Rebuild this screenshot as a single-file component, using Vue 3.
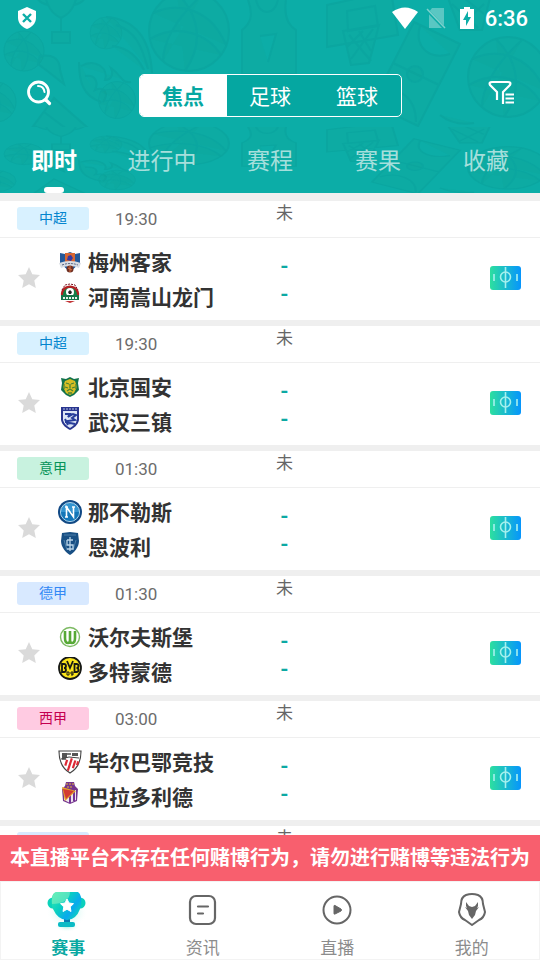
<template>
  <div class="page">
    <header class="header">
      <svg class="doodles" viewBox="0 0 540 193" preserveAspectRatio="xMidYMid slice" aria-hidden="true">
        <defs>
          <g id="ball">
            <circle r="40" />
            <path d="M-36-18C-10-30 22-22 37 14M-39 8C-12-8 18 2 32 24M-12-38C12-14 14 14-4 40M14-37C-14-12-26 12-26 30" />
          </g>
          <g id="hoop">
            <path d="M0 8l64-14 7 44-71 12zM20 14l28-5 3 20-30 5zM16 34l36-6-10 38-18 2zM22 38l22 26M32 34l12 20M46 32l-22 30M36 34l-16 16" />
          </g>
          <g id="court">
            <path d="M38 0l46 22-42 82-46-22zM17 41l46 22M44 4c-6 22 10 34 30 28M4 72c18-10 36 4 36 28" />
            <circle cx="39" cy="52" r="8" />
          </g>
          <g id="cup">
            <path d="M0 0h34c0 22-4 34-17 40C4 34 0 22 0 0zM0 5h-10c0 14 4 20 14 22M34 5h10c0 14-4 20-14 22M17 40v14M8 54h18v11H8z" />
          </g>
          <g id="shirt">
            <path d="M8 0C14 16 10 24 2 30v44h54V30C46 24 44 14 46 0M16 0c4 16 18 16 22 0M20 36l16-2-8 28" />
          </g>
          <g id="flame">
            <path d="M0 4c14-8 28 2 24 14 8 0 8-8 6-12 12 8 10 16 20 14M4 14c10-2 14 6 10 14 10-4 14 4 8 12M-2 0c0 20 4 34 22 40" />
          </g>
          <g id="horn">
            <path d="M0 46L34 0l34 30zM14 28l28 12M24 14l24 18M4 46l-8-4" />
          </g>
          <g id="row">
            <use href="#cup" x="44" y="-22" />
            <use href="#ball" transform="translate(24 51) scale(.5)" />
            <use href="#ball" transform="translate(106 33) scale(.4)" />
            <path d="M106 17c28 2 44 20 46 56M116 25c20 6 26 22 32 44M112 46c18 2 26 12 32 24" />
            <use href="#ball" x="189" y="31" />
            <use href="#flame" x="81" y="62" />
            <use href="#ball" transform="translate(117 100) scale(.46)" />
            <use href="#horn" x="20" y="98" />
            <path d="M40 56c12-2 20 2 20 14l4 14-18-14-8-6z" />
            <use href="#shirt" x="240" y="0" />
            <use href="#hoop" x="327" y="-3" />
            <use href="#court" x="376" y="22" />
            <use href="#ball" x="508" y="77" />
            <use href="#ball" transform="translate(-4 102) scale(.5)" />
            <path d="M440 115c10 8 22 10 34 8M448-2h42l-8 32h-22zM452 4l26 24M464-2l20 16M484 4l-26 24" />
          </g>
          <clipPath id="upper"><path d="M0 0h540v127H0z" /></clipPath>
          <clipPath id="lower"><path d="M0 127h540v66H0z" /></clipPath>
        </defs>
        <g clip-path="url(#upper)"><use href="#row" /></g>
        <g clip-path="url(#lower)"><use href="#row" transform="translate(0 127) scale(1 .53)" /></g>
      </svg>

      <div class="status-bar">
        <svg class="shield" viewBox="0 0 20 24"><path d="M10 1l9 4v7c0 5-4 9-9 11-5-2-9-6-9-11V5z" fill="#fff" /><path d="M6 8l8 8M14 8l-8 8" stroke="#0cada7" stroke-width="2.4" /></svg>
        <svg class="wifi" viewBox="0 0 26 22"><path d="M0 5Q13-4 26 5L13 22z" fill="#fff" /></svg>
        <svg class="sim" viewBox="0 0 20 22"><path d="M6 1h12v20H3V5z" fill="#fff" opacity=".32" /><path d="M1 3l18 19" stroke="#0cada7" stroke-width="3" /><path d="M1 2l18 19" stroke="#7dd1cd" stroke-width="1.5" /></svg>
        <svg class="battery" viewBox="0 0 14 22"><path d="M4 0h6v2h4v20H0V2h4z" fill="#fff" /><path d="M8 4L3 13h3v6l5-9H8z" fill="#0cada7" /></svg>
        <span class="clock">6:36</span>
      </div>

      <div class="toolbar">
        <button class="icon-btn" aria-label="搜索">
          <svg width="26" height="26" viewBox="0 0 26 26" fill="none" stroke="#fff" stroke-linecap="round"><circle cx="12.5" cy="12" r="10" stroke-width="2.8" /><path d="M20 20l3.500 3.500" stroke-width="3.200" /><path d="M12 6c4 0 6 2 6.500 6" stroke-width="2" /></svg>
        </button>
        <div class="segments">
          <button
            v-for="sport in sports"
            :key="sport"
            class="segment"
            :class="{ active: sport === activeSport }"
            @click="activeSport = sport"
          >{{ sport }}</button>
        </div>
        <button class="icon-btn" aria-label="筛选">
          <svg width="26" height="26" viewBox="0 0 26 26" fill="none" stroke="#fff" stroke-width="2.200"><path d="M9 20v-8L2 5c-1-2 0-3 2-3h16c2 0 3 1 2 3l-7 7v12" stroke-linejoin="round" /><path d="M17.500 14.500H26M17.500 18.500H26M17.500 22.500H26" /></svg>
        </button>
      </div>

      <nav class="tabs">
        <button
          v-for="tab in tabs"
          :key="tab"
          class="tab"
          :class="{ active: tab === activeTab }"
          @click="activeTab = tab"
        >{{ tab }}</button>
      </nav>
    </header>

    <main class="list">
      <article v-for="match in matches" :key="match.id" class="match">
        <div class="meta">
          <div class="meta-left">
            <span class="league" :class="match.color">{{ match.league }}</span>
            <time class="time">{{ match.time }}</time>
          </div>
          <span class="state">未</span>
        </div>
        <div v-if="match.teams.length" class="body">
          <div class="teams">
            <button class="star" aria-label="收藏">
              <svg width="24" height="24" viewBox="0 0 24 24"><path d="M12 1l3.300 7.200 7.700.9-5.700 5.300 1.500 7.600L12 18.200 5.200 22l1.500-7.600L1 9.100l7.700-.9z" fill="#dadada" /></svg>
            </button>
            <div class="crests">
              <svg v-for="team in match.teams" :key="team.crest" width="24" height="24" viewBox="0 0 24 24">
                <g v-if="team.crest === 'meizhou'">
                  <path d="M2 3l5 1 5-2 5 2 5-1v10l-10 9L2 13z" fill="#235899" />
                  <path d="M7 3h10v10l-5 9-5-9z" fill="#d76632" /><path d="M10 6l3-1 2 3-2 3-4-1z" fill="#3838a0" />
                  <path d="M1 13q11-4 22 0l-2 5q-9-4-18 0z" fill="#d8dce3" /><path d="M4 15q8-3 16 0" stroke="#55627f" stroke-dasharray="2 1" fill="none" />
                  <circle cx="12" cy="19" r="3.500" fill="#6d2f22" /><path d="M10 18l4 2M12 16v6" stroke="#df7041" />
                </g>
                <g v-else-if="team.crest === 'henan'">
                  <path d="M3 14C1 0 23 0 21 14z" fill="#b52023" /><path d="M5 14C4 3 20 3 19 14z" fill="#168047" />
                  <path d="M4 8l3-5 5-1 5 1 3 5" fill="none" stroke="#7d1620" stroke-dasharray="2 1" /><circle cx="12" cy="10" r="4" fill="#fff" />
                  <path d="M12 8l2 2-1 2h-2l-1-2z" fill="#222" />
                  <path d="M3 13h18v5H3z" fill="#17764a" /><path d="M5 16h14" stroke="#e8f4ec" stroke-width="2" stroke-dasharray="2 1" /><path d="M7 19h10l-5 2z" fill="#c13234" />
                </g>
                <g v-else-if="team.crest === 'beijing'">
                  <path d="M12 2l4 2 5-1-1 5 1 7-5 5-4 2-4-2-5-5 1-7-1-5 5 1z" fill="#12724b" />
                  <path d="M7 6l5-2 5 2 2 6-3 6-4 2-4-2-3-6z" fill="#d8be23" />
                  <path d="M8 8l3 1M16 8l-3 1M7 12l3 1M17 12l-3 1M9 16l3-2 3 2M12 9v4M6 9v5M18 9v5M10 18h4" fill="none" stroke="#4a8233" stroke-width="1.300" />
                </g>
                <g v-else-if="team.crest === 'wuhan'">
                  <path d="M3 0h18v13c-1 5-5 8-9 10-4-2-8-5-9-10z" fill="#28358f" /><path d="M5 4h14v9c-1 4-4 6-7 8-3-2-6-4-7-8z" fill="#dce4f5" />
                  <path d="M5 2h14" stroke="#b9c3e5" stroke-dasharray="2 1" /><path d="M7 7h5l-2 3 5-3 3 1-4 3 3 2-7 1 2 3M7 12l3 6M12 16l5 1M7 15h3" fill="none" stroke="#263d9b" stroke-width="2" />
                </g>
                <g v-else-if="team.crest === 'napoli'">
                  <circle cx="12" cy="12" r="12" fill="#114985" /><circle cx="12" cy="12" r="9.500" fill="#3494d0" stroke="#b2d8ee" />
                  <path d="M3 12a9 9 0 0018 0z" fill="#1476b8" /><path d="M8.500 17V7l7 10V7M7 7h3M14 7h3M7 17h3" stroke="#fff" stroke-width="1.600" fill="none" />
                </g>
                <g v-else-if="team.crest === 'empoli'">
                  <path d="M4 1l8-1 8 1 1 8c0 6-5 12-9 14C8 21 3 15 3 9z" fill="#184f84" /><path d="M6 3h12M6 8l3 10M18 8l-3 10" stroke="#4c7fa8" fill="none" />
                  <path d="M12 5v14M9 8h6M9 8v5h6v4H9" stroke="#b9d4e8" stroke-width="1.300" fill="none" />
                </g>
                <g v-else-if="team.crest === 'wolfsburg'">
                  <circle cx="12" cy="12" r="9.500" fill="#fff" stroke="#7cba62" stroke-width="1.400" /><path d="M7 6v7q0 5 3 5 2 0 2-3 0 3 2 3 3 0 3-5V6M12 6v9" fill="none" stroke="#57a936" stroke-width="2.600" />
                </g>
                <g v-else-if="team.crest === 'dortmund'">
                  <circle cx="12" cy="11" r="11" fill="#fbe51b" stroke="#171915" stroke-width="1.800" />
                  <path d="M4 7v8h2q2 0 2-2t-2-2q2 0 2-2t-2-2zM9 4l3 7 3-7M16.500 7v8h2q2 0 2-2t-2-2q2 0 2-2t-2-2z" fill="none" stroke="#171915" stroke-width="1.800" />
                  <path d="M9 15h2v3H9zM13 18h2v-3h-2v2h2" fill="none" stroke="#171915" />
                </g>
                <g v-else-if="team.crest === 'bilbao'">
                  <path d="M1 1h22c0 10-4 18-11 22C5 19 1 11 1 1z" fill="#fff" stroke="#444" stroke-width="1.200" /><path d="M4 3h5v5H4zM14 3h6v3h-6" fill="#555" />
                  <path d="M9 4h4M4 9h4" stroke="#777" stroke-width="2" /><path d="M8 17V11M12 21V8M16 17V9M19 13V9" stroke="#dc2935" stroke-width="2.200" transform="rotate(18 12 14)" /><path d="M3 9l8-2 10 1" stroke="#444" fill="none" />
                </g>
                <g v-else-if="team.crest === 'valladolid'">
                  <path d="M8 0h8l1 4 3 3-1 12-7 3-7-3L4 7l3-3z" fill="#75358d" /><path d="M6 8h12v10l-6 3-6-3z" fill="#eee6ee" />
                  <path d="M12 8v13M16 8v11" stroke="#733396" stroke-width="2" /><path d="M4 5l14 4-11 10z" fill="#e3a42b" /><path d="M5 7l11 2-8 8z" fill="#d33b33" /><path d="M8 2h8M9 5h6" stroke="#e5b437" stroke-dasharray="2 1" />
                </g>
              </svg>
            </div>
            <div class="names">
              <span v-for="team in match.teams" :key="team.name">{{ team.name }}</span>
            </div>
          </div>
          <div class="score"><span>-</span><span>-</span></div>
          <button class="pitch" aria-label="阵容">
            <svg width="31" height="24" viewBox="0 0 31 24">
              <defs><linearGradient id="grass"><stop offset="0" stop-color="#2ddf9f" /><stop offset="1" stop-color="#0695fd" /></linearGradient></defs>
              <rect width="31" height="24" rx="3" fill="url(#grass)" />
              <g fill="none" stroke="#a5f0ee" stroke-width="1.600"><path d="M15.500 1v21M4 8v7M27 8v7" /><circle cx="15.500" cy="11" r="5" /></g>
            </svg>
          </button>
        </div>
      </article>
    </main>

    <p class="notice">本直播平台不存在任何赌博行为，请勿进行赌博等违法行为</p>

    <nav class="bottom-nav">
      <button
        v-for="item in navItems"
        :key="item.label"
        class="nav-item"
        :class="{ active: item.label === activeNav }"
        @click="activeNav = item.label"
      >
        <svg v-if="item.icon === 'cup'" width="44" height="44" viewBox="0 0 44 44">
          <defs>
            <linearGradient id="cupFill" x1="0" y1="0" x2="1" y2=".7"><stop offset="0" stop-color="#35eab0" /><stop offset=".45" stop-color="#08cfc1" /><stop offset=".75" stop-color="#08a9ee" /><stop offset="1" stop-color="#0bd3bb" /></linearGradient>
            <radialGradient id="glow"><stop offset="0" stop-color="#59e9cc" stop-opacity=".65" /><stop offset="1" stop-color="#fff" stop-opacity="0" /></radialGradient>
          </defs>
          <ellipse cx="21" cy="24" rx="21" ry="16" fill="url(#glow)" /><ellipse cx="21" cy="38" rx="13" ry="6" fill="url(#glow)" />
          <circle cx="7" cy="15" r="5.500" fill="#0bd3ba" /><circle cx="34" cy="15" r="5.500" fill="#0bcfbc" />
          <path d="M18 30h6v5h-6z" fill="#067bb0" /><rect x="12" y="34" width="17" height="5" rx="2" fill="#08bbc5" />
          <path d="M10 4h22q2 1 3 5 1 8-1 12-4 11-13 11T7 21Q5 17 6 9q1-4 4-5z" fill="url(#cupFill)" /><path d="M10 4h14c0 8-7 12-18 12q-1-10 4-12z" fill="#9cf5bf" opacity=".5" />
          <path d="M21 11l2 4 4.500.7-3.300 3.200.8 4.600-4-2.200-4 2.200.8-4.600-3.300-3.200 4.500-.7z" fill="#fff" stroke="#fff" stroke-linejoin="round" />
        </svg>
        <svg v-else-if="item.icon === 'news'" width="44" height="44" viewBox="0 0 44 44" fill="none" stroke="#666" stroke-width="2.200" stroke-linecap="round"><rect x="9" y="8" width="25" height="28" rx="6" /><path d="M17 18.500h10M17 25.500h5" /></svg>
        <svg v-else-if="item.icon === 'live'" width="44" height="44" viewBox="0 0 44 44"><circle cx="22" cy="22" r="13.500" fill="none" stroke="#666" stroke-width="2" /><path d="M19 18q0-1 1-.5l6 3.500q1 1 0 2l-6 3q-1 .5-1-.5z" fill="#666" stroke="#666" /></svg>
        <svg v-else width="44" height="44" viewBox="0 0 44 44"><path d="M16 7q6-2 12 0 5 2 5 9l2 8q-1 6-6 8l-7 5-7-5q-5-2-6-8l2-8q0-7 5-9z" fill="none" stroke="#666" stroke-width="2" stroke-linejoin="round" /><path d="M16 14l3 4 3 1 3-1 3-4v4l-1 2 2-1-3 4-1 4-3 4-3-4-1-4-3-4 2 1-1-2z" fill="#666" /></svg>
        <span>{{ item.label }}</span>
      </button>
    </nav>
  </div>
</template>

<script setup>
import { ref } from 'vue';

const sports = ['焦点', '足球', '篮球'];
const tabs = ['即时', '进行中', '赛程', '赛果', '收藏'];
const activeSport = ref('焦点');
const activeTab = ref('即时');
const activeNav = ref('赛事');

const matches = ref([
  { id: 1, league: '中超', color: 'sky', time: '19:30', teams: [{ name: '梅州客家', crest: 'meizhou' }, { name: '河南嵩山龙门', crest: 'henan' }] },
  { id: 2, league: '中超', color: 'sky', time: '19:30', teams: [{ name: '北京国安', crest: 'beijing' }, { name: '武汉三镇', crest: 'wuhan' }] },
  { id: 3, league: '意甲', color: 'green', time: '01:30', teams: [{ name: '那不勒斯', crest: 'napoli' }, { name: '恩波利', crest: 'empoli' }] },
  { id: 4, league: '德甲', color: 'blue', time: '01:30', teams: [{ name: '沃尔夫斯堡', crest: 'wolfsburg' }, { name: '多特蒙德', crest: 'dortmund' }] },
  { id: 5, league: '西甲', color: 'pink', time: '03:00', teams: [{ name: '毕尔巴鄂竞技', crest: 'bilbao' }, { name: '巴拉多利德', crest: 'valladolid' }] },
  { id: 6, league: '', color: 'blue', time: '', teams: [] },
]);

const navItems = [
  { label: '赛事', icon: 'cup' },
  { label: '资讯', icon: 'news' },
  { label: '直播', icon: 'live' },
  { label: '我的', icon: 'mine' },
];
</script>

<style>
html, body {
  margin: 0;
}
</style>

<style scoped>
.page {
  display: flex;
  flex-direction: column;
  height: 100vh;
  background: #efefef;
  font-family: Roboto, 'Noto Sans CJK SC', sans-serif;
  color: #333;
}

button {
  margin: 0;
  padding: 0;
  border: none;
  background: none;
  font: inherit;
  color: inherit;
  cursor: pointer;
}

svg {
  display: block;
  flex: none;
}

.header {
  position: relative;
  flex: none;
  background: #0cada7;
  color: #fff;
}

/* 头部背景线稿 */
.doodles {
  position: absolute;
  inset: 0;
  width: 100%;
  height: 100%;
  fill: rgba(20, 150, 130, 0.08);
  stroke: #0ba6a0;
  stroke-width: 2;
}

.status-bar,
.toolbar,
.tabs {
  position: relative;
}

.status-bar {
  display: flex;
  align-items: center;
  height: 36px;
  padding: 0 12px 0 17px;
}

.shield {
  width: 20px;
  height: 24px;
  margin-right: auto;
}

.wifi {
  width: 26px;
  height: 22px;
}

.sim {
  width: 20px;
  height: 22px;
  margin: 0 14px 0 8px;
}

.battery {
  width: 14px;
  height: 22px;
}

.clock {
  margin-left: 11px;
  font-size: 22px;
  font-weight: 500;
}

.toolbar {
  display: flex;
  align-items: center;
  justify-content: space-between;
  padding: 38px 26px 10px;
}

.icon-btn {
  padding-bottom: 6px;
}

.segments {
  display: flex;
  border: 1px solid #fff;
  border-radius: 5px;
  background: #05a7a1;
  overflow: hidden;
}

.segment {
  width: 87px;
  height: 41px;
  padding-bottom: 2px;
  font-size: 21px;
}

.segment.active {
  background: #fff;
  color: #05a7a1;
  font-weight: 700;
}

.tabs {
  display: grid;
  grid-template-columns: repeat(5, 1fr);
  height: 66px;
}

.tab {
  display: flex;
  flex-direction: column;
  align-items: center;
  justify-content: space-between;
  padding-top: 18px;
  font-size: 23px;
  line-height: 34px;
  color: #a5dfdc;
}

.tab.active {
  color: #fff;
  font-weight: 700;
}

.tab.active::after {
  content: '';
  width: 20px;
  height: 6px;
  border-radius: 3px;
  background: #fff;
}

.list {
  flex: 1;
  min-height: 0;
  padding-top: 8px;
  overflow-y: auto;
  scrollbar-width: none;
}

.match {
  margin-bottom: 6px;
  background: #fff;
}

.meta,
.body {
  display: grid;
  grid-template-columns: minmax(0, 1fr) 30px minmax(0, 1fr);
  padding-left: 29px;
}

.meta {
  height: 36px;
  border-bottom: 1px solid #efefef;
}

.meta-left {
  display: flex;
  align-items: center;
  gap: 26px;
  height: 35px;
  margin-left: -12px;
}

.league {
  width: 72px;
  height: 23px;
  border-radius: 3px;
  font-size: 14px;
  line-height: 23px;
  text-align: center;
}

.league.sky {
  background: #d8f1ff;
  color: #0485ce;
}

.league.green {
  background: #c8f2df;
  color: #079459;
}

.league.blue {
  background: #d8e9ff;
  color: #3388f5;
}

.league.pink {
  background: #ffcbe2;
  color: #c4004f;
}

.time {
  font-size: 17px;
  color: #6c6c6c;
}

.state {
  font-size: 17px;
  line-height: 24px;
  text-align: center;
  color: #666;
}

.body {
  box-sizing: border-box;
  height: 82px;
  padding-bottom: 2px;
  align-items: center;
}

.teams {
  display: flex;
  align-items: center;
  margin-left: -12px;
}

.star {
  margin-right: 17px;
}

.crests {
  display: flex;
  flex-direction: column;
  gap: 8px;
}

.names {
  display: flex;
  flex-direction: column;
  margin-left: 6px;
  padding-top: 6px;
  font-size: 21px;
  font-weight: 700;
  line-height: 35px;
  white-space: nowrap;
}

.score {
  display: flex;
  flex-direction: column;
  padding-top: 4px;
  font-size: 21px;
  font-weight: 700;
  line-height: 28px;
  text-align: center;
  color: #0ca9a3;
}

.pitch {
  justify-self: end;
  margin-right: 19px;
}

.notice {
  flex: none;
  margin: 0;
  background: #f85f6e;
  color: #fff;
  font-size: 20px;
  font-weight: 700;
  line-height: 46px;
  text-align: center;
  white-space: nowrap;
}

.bottom-nav {
  display: grid;
  grid-template-columns: repeat(4, 1fr);
  flex: none;
  height: 79px;
  box-sizing: border-box;
  border: 1px solid #f3f3f3;
  background: #fff;
}

.nav-item {
  display: flex;
  flex-direction: column;
  align-items: center;
  padding-top: 6px;
  gap: 4px;
  font-size: 17px;
  line-height: 24px;
  color: #8c8c8c;
}

.nav-item.active {
  color: #08a8a2;
  font-weight: 700;
}
</style>
